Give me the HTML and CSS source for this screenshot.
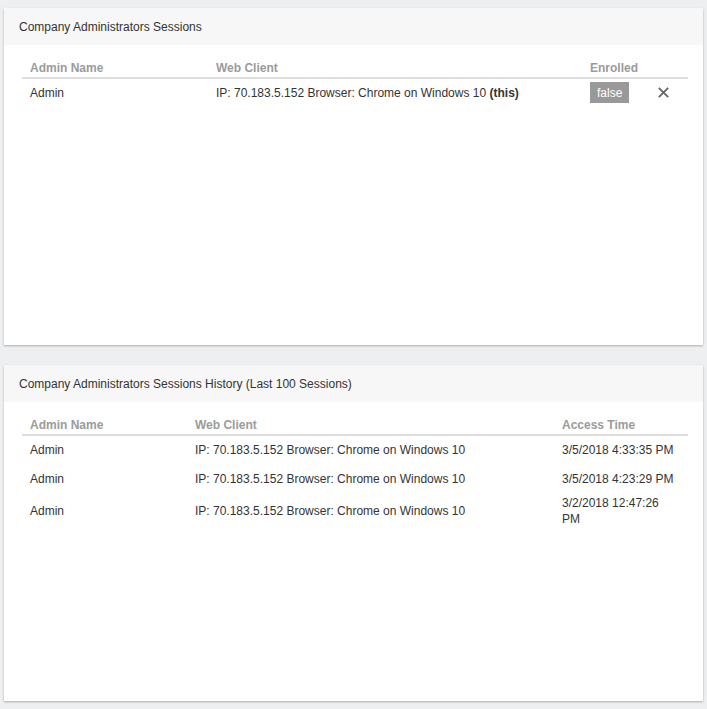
FILE: index.html
```html
<!DOCTYPE html>
<html>
<head>
<meta charset="utf-8">
<link rel="stylesheet" href="styles.css">
</head>
<body>
<section class="card card-a">
  <div class="card-head">Company Administrators Sessions</div>
  <div class="tbl tbl-a">
    <div class="row head">
      <div class="cell">Admin Name</div>
      <div class="cell">Web Client</div>
      <div class="cell">Enrolled</div>
      <div class="cell"></div>
    </div>
    <div class="row">
      <div class="cell">Admin</div>
      <div class="cell">IP: 70.183.5.152 Browser: Chrome on Windows 10 <b>(this)</b></div>
      <div class="cell"><span class="badge">false</span></div>
      <div class="cell"><svg class="close" width="11" height="11" viewBox="0 0 11 11"><path d="M0.8 0.8L10.2 10.2M10.2 0.8L0.8 10.2" stroke="#666" stroke-width="1.8" fill="none"/></svg></div>
    </div>
  </div>
</section>
<section class="card card-b">
  <div class="card-head">Company Administrators Sessions History (Last 100 Sessions)</div>
  <div class="tbl tbl-b">
    <div class="row head">
      <div class="cell">Admin Name</div>
      <div class="cell">Web Client</div>
      <div class="cell">Access Time</div>
    </div>
    <div class="row">
      <div class="cell">Admin</div>
      <div class="cell">IP: 70.183.5.152 Browser: Chrome on Windows 10</div>
      <div class="cell">3/5/2018 4:33:35 PM</div>
    </div>
    <div class="row">
      <div class="cell">Admin</div>
      <div class="cell">IP: 70.183.5.152 Browser: Chrome on Windows 10</div>
      <div class="cell">3/5/2018 4:23:29 PM</div>
    </div>
    <div class="row">
      <div class="cell">Admin</div>
      <div class="cell">IP: 70.183.5.152 Browser: Chrome on Windows 10</div>
      <div class="cell">3/2/2018 12:47:26 PM</div>
    </div>
  </div>
</section>
</body>
</html>
```
FILE: styles.css
```css
html, body {
  margin: 0;
  padding: 0;
}
body {
  background: #eeeff1;
  padding: 8px 4px;
  font-family: "Liberation Sans", Arial, sans-serif;
  font-size: 12px;
  line-height: 16px;
  color: #333;
  display: flex;
  flex-direction: column;
  gap: 20px;
}
.card {
  background: #fff;
  box-shadow: 0 1px 2px rgba(0, 0, 0, 0.28);
  box-sizing: border-box;
}
.card-a { height: 337px; }
.card-b { height: 336px; }
.card-head {
  height: 37px;
  background: #f7f7f7;
  display: flex;
  align-items: center;
  padding: 0 15px;
  color: #333;
}
.tbl {
  margin: 12px 15px 0 18px;
}
.row {
  display: grid;
  min-height: 29px;
  box-sizing: border-box;
  padding: 1px 0 3px;
  align-items: center;
}
.row.head {
  min-height: 0;
  padding: 3px 0 1px;
  border-bottom: 2px solid #dddddd;
  font-weight: bold;
  color: #9b9b9b;
}
.tbl-a .row {
  grid-template-columns: 186px 374px 63px 43px;
}
.tbl-b .row {
  grid-template-columns: 165px 367px 134px;
}
.cell {
  padding: 0 8px;
}
.tbl-b .cell:last-child {
  padding-right: 12px;
}
.badge {
  display: inline-block;
  background: #999;
  color: #fff;
  padding: 3px 7px 2px;
  line-height: 16px;
  font-size: 12px;
}
.close {
  display: block;
  margin-left: 5px;
}
```
